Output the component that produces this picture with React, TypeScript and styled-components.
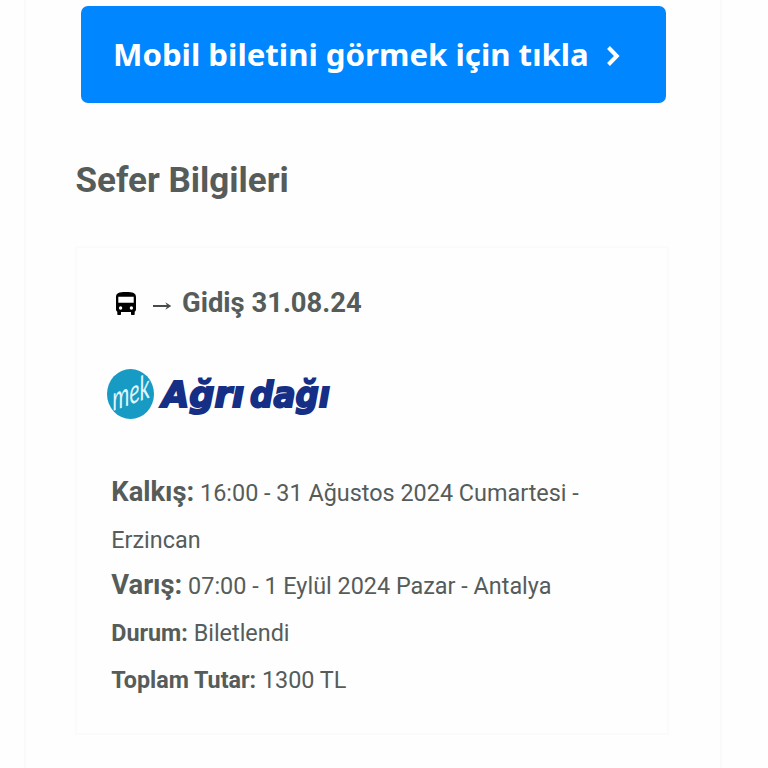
import React from "react";
import styled, { createGlobalStyle } from "styled-components";

const GlobalStyle = createGlobalStyle`
  * { box-sizing: border-box; }
  body {
    margin: 0;
    background: #fefefe;
    color: #555c5a;
    font-family: Roboto, "Liberation Sans", sans-serif;
  }
`;

const Page = styled.main`
  width: 768px;
  height: 768px;
  padding-left: 24px;
  overflow: hidden;
`;

const Mail = styled.div`
  width: 698px;
  height: 768px;
  padding: 6px 50px 0 49px;
  border: solid #fafafa;
  border-width: 0 2px;
`;

const TicketButton = styled.a`
  display: flex;
  align-items: center;
  width: 584.5px;
  height: 97px;
  margin-left: 6px;
  padding: 0 0 0 32px;
  border-radius: 7px;
  background: #0086ff;
  color: #fff;
  font: 700 31.2px/44px "Noto Sans", "Open Sans", sans-serif;
  white-space: nowrap;
  text-decoration: none;
`;

const ButtonLabel = styled.span`
  width: 493.5px;
  padding-bottom: 1px;
`;

const Chevron = styled.svg`
  width: 13px;
  height: 20px;
  margin-top: 2px;
`;

const Heading = styled.h1`
  margin: 56px 0 0 0.5px;
  height: 44px;
  font-size: 35px;
  line-height: 44px;
  font-weight: 700;
`;

const Card = styled.section`
  width: 594px;
  height: 489px;
  margin-top: 43px;
  padding: 33px 34px 0;
  border: 2px solid #fbfbfb;
`;

const TripTitle = styled.h2`
  display: flex;
  align-items: center;
  height: 44px;
  margin: 0;
  font-size: 27.4px;
  line-height: 44px;
`;

const BusIcon = styled.svg`
  width: 20px;
  height: 23px;
  margin: 1px 16px 0 5px;
`;

const ArrowIcon = styled.svg`
  width: 20px;
  height: 12px;
  margin: 6px 10px 0 0;
`;

const Logo = styled.svg`
  display: block;
  width: 230px;
  height: 56px;
  margin: 41px 0 0 -5px;
`;

const Details = styled.div`
  margin: 48px 0 0 0.3px;
  font-size: 23.4px;
  line-height: 46.7px;
`;

const Row = styled.p`
  margin: 0;
`;

const Label = styled.strong<{ $large?: boolean }>`
  font-size: ${({ $large }) => ($large ? "27.3px" : "23.3px")};
  line-height: 1;
`;

const rows = [
  { label: "Kalkış:", value: "16:00 - 31 Ağustos 2024 Cumartesi - Erzincan", large: true },
  { label: "Varış:", value: "07:00 - 1 Eylül 2024 Pazar - Antalya", large: true },
  { label: "Durum:", value: "Biletlendi" },
  { label: "Toplam Tutar:", value: "1300 TL" },
];

function CompanyLogo() {
  return (
    <Logo viewBox="106 366 230 56" role="img" aria-label="Mek Ağrı dağı">
      <ellipse cx="130.5" cy="394" rx="23.5" ry="25" fill="#179bc4" />
      <text
        transform="translate(113 411) rotate(-20) skewX(-16)"
        fill="#dff4f9"
        fontFamily="Lato, sans-serif"
        fontStyle="italic"
        fontWeight="400"
        fontSize="32"
        textLength="40"
        lengthAdjust="spacingAndGlyphs"
      >
        mek
      </text>
      <g
        fill="#152f86"
        stroke="#152f86"
        strokeWidth="2"
        strokeLinejoin="miter"
        fontFamily="DejaVu Sans, sans-serif"
        fontStyle="italic"
        fontWeight="700"
        fontSize="35"
      >
        <text x="162" y="406.5" textLength="82" lengthAdjust="spacingAndGlyphs">Ağrı</text>
        <text x="250" y="406.5" textLength="80" lengthAdjust="spacingAndGlyphs">dağı</text>
      </g>
    </Logo>
  );
}

export default function App() {
  return (
    <>
      <GlobalStyle />
      <Page>
        <Mail>
          <TicketButton>
            <ButtonLabel>Mobil biletini görmek için tıkla</ButtonLabel>
            <Chevron viewBox="0 0 13 20" fill="none" stroke="#fff" strokeWidth="4">
              <path d="M1.5 1.5 9.8 10l-8.3 8.5" />
            </Chevron>
          </TicketButton>
          <Heading>Sefer Bilgileri</Heading>
          <Card>
            <TripTitle>
              <BusIcon viewBox="0 0 20 23">
                <path
                  fill="#000"
                  fillRule="evenodd"
                  d="M0 5C0 1 3 0 10 0s10 1 10 5v12c0 1.300-.5 2.200-1.300 2.800V22c0 .6-.4 1-1 1H16c-.6 0-1-.4-1-1v-2H5v2c0 .6-.4 1-1 1H2.300c-.6 0-1-.4-1-1v-2.200C.5 19.200 0 18.300 0 17V5zm2.300-.2v6h15.400v-6H2.300zM4.600 14.300a1.700 1.700 0 1 0 0 3.400 1.700 1.700 0 0 0 0-3.400zm10.800 0a1.700 1.700 0 1 0 0 3.400 1.700 1.700 0 0 0 0-3.400z"
                />
              </BusIcon>
              <ArrowIcon viewBox="0 0 20 12">
                <path fill="#464c4a" d="M1 5.100h13.800L13.300 2.200 19.300 6l-6 3.800 1.500-2.900H1z" />
              </ArrowIcon>
              Gidiş 31.08.24
            </TripTitle>
            <CompanyLogo />
            <Details>
              {rows.map(({ label, value, large }) => (
                <Row key={label}>
                  <Label $large={large}>{label}</Label> {value}
                </Row>
              ))}
            </Details>
          </Card>
        </Mail>
      </Page>
    </>
  );
}
